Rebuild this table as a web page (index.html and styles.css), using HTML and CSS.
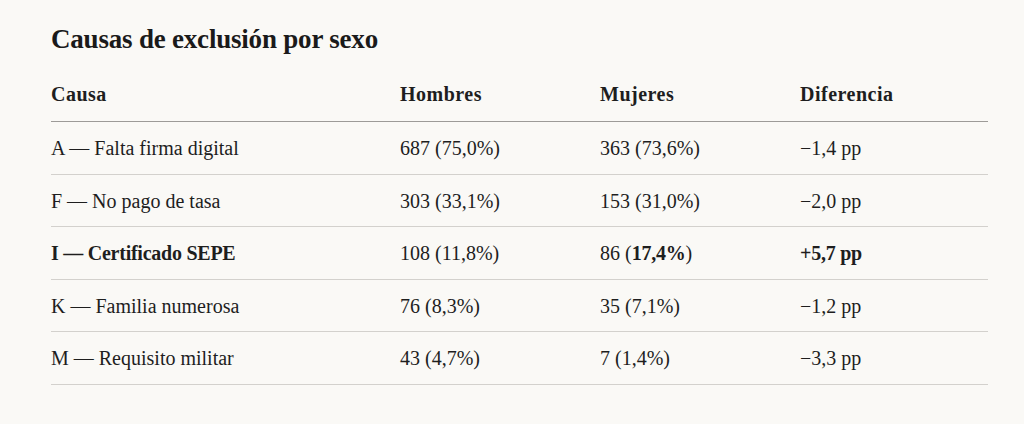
FILE: index.html
```html
<!DOCTYPE html>
<html lang="es">
<head>
<meta charset="utf-8">
<link rel="stylesheet" href="styles.css">
</head>
<body>
<main class="page">
  <h2 class="title">Causas de exclusión por sexo</h2>
  <table class="tbl">
    <thead>
      <tr><th class="c1">Causa</th><th class="c2">Hombres</th><th class="c3">Mujeres</th><th class="c4">Diferencia</th></tr>
    </thead>
    <tbody>
      <tr><td>A — Falta firma digital</td><td>687 (75,0%)</td><td>363 (73,6%)</td><td>−1,4 pp</td></tr>
      <tr><td>F — No pago de tasa</td><td>303 (33,1%)</td><td>153 (31,0%)</td><td>−2,0 pp</td></tr>
      <tr><td><strong>I — Certificado SEPE</strong></td><td>108 (11,8%)</td><td>86 (<strong>17,4%</strong>)</td><td><strong>+5,7 pp</strong></td></tr>
      <tr><td>K — Familia numerosa</td><td>76 (8,3%)</td><td>35 (7,1%)</td><td>−1,2 pp</td></tr>
      <tr><td>M — Requisito militar</td><td>43 (4,7%)</td><td>7 (1,4%)</td><td>−3,3 pp</td></tr>
    </tbody>
  </table>
</main>
</body>
</html>
```
FILE: styles.css
```css
html, body { margin: 0; padding: 0; background: #faf9f6; }
body { font-family: "Liberation Serif", "Times New Roman", serif; color: #1e1e1e; }
.page { padding: 21px 36px 0 51px; }
.title { margin: 0 0 25px; font-size: 27px; font-weight: 700; line-height: 36px; letter-spacing: -0.2px; color: #1a1a1a; }
.tbl { width: 937px; border-collapse: collapse; font-size: 20px; line-height: 24px; }
.tbl th, .tbl td { text-align: left; vertical-align: top; }
.tbl th { font-weight: 700; padding: 0 0 15px; letter-spacing: 0.5px; border-bottom: 1px solid #9d9b98; }
.tbl td { padding: 14px 0 13.5px; border-bottom: 1px solid #d3d1cd; }
.c1 { width: 349px; }
.c2 { width: 200px; }
.c3 { width: 200px; }
.tbl strong { font-weight: 700; letter-spacing: -0.25px; }
```
